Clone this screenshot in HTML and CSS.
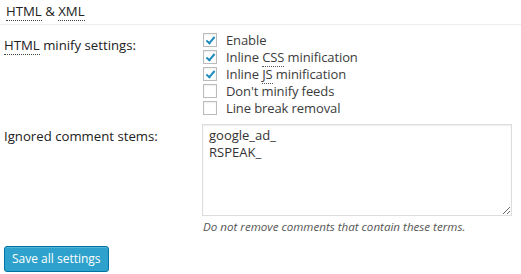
FILE: index.html
```html
<!DOCTYPE html>
<html lang="en">
<head>
    <meta charset="UTF-8">
    <title>HTML &amp; XML</title>
    <link rel="stylesheet" href="styles.css">
</head>
<body>
    <div class="wrap">
        <h3 class="section-title"><abbr>HTML</abbr> &amp; <abbr>XML</abbr></h3>
        <div class="form-table">
            <div class="row">
                <div class="th"><abbr>HTML</abbr> minify settings:</div>
                <div class="td checks">
                    <label><span class="box on"></span><span>Enable</span></label>
                    <label><span class="box on"></span><span>Inline <abbr>CSS</abbr> minification</span></label>
                    <label><span class="box on"></span><span>Inline <abbr>JS</abbr> minification</span></label>
                    <label><span class="box"></span><span>Don't minify feeds</span></label>
                    <label><span class="box"></span><span>Line break removal</span></label>
                </div>
            </div>
            <div class="row">
                <div class="th th-stems">Ignored comment stems:</div>
                <div class="td">
                    <textarea class="stems">google_ad_
RSPEAK_</textarea>
                    <p class="description">Do not remove comments that contain these terms.</p>
                </div>
            </div>
        </div>
        <button class="button-primary">Save all settings</button>
    </div>
</body>
</html>
```
FILE: styles.css
```css
body {
    margin: 0;
    background: #fff;
    color: #3c3c3c;
    font-family: "Open Sans", sans-serif;
    font-size: 13px;
}

abbr {
    text-decoration: none;
    border-bottom: 1px dotted #444;
}

.section-title {
    margin: 0;
    padding: 3px 6px 5px;
    font-size: 13.2px;
    font-weight: 400;
    line-height: 16px;
    color: #222;
    border-bottom: 1px solid #eee;
}

.form-table {
    padding-top: 6px;
}

.row {
    display: flex;
}

.th {
    width: 199px;
    padding-left: 4px;
    font-size: 13.2px;
    font-weight: 400;
    color: #222;
    line-height: 22px;
    padding-top: 3px;
}

.th-stems {
    padding-top: 9px;
}

.td {
    flex: 1;
}

.checks {
    display: flex;
    flex-direction: column;
    letter-spacing: -0.1px;
}

.checks label {
    display: flex;
    align-items: center;
    height: 17px;
    gap: 9px;
}

.box {
    width: 14px;
    height: 14px;
    box-sizing: border-box;
    border: 1px solid #bbb;
    background: #fff;
    box-shadow: inset 0 1px 2px rgba(0, 0, 0, 0.07);
    position: relative;
}

.box.on::after {
    content: "";
    position: absolute;
    left: 4px;
    top: 1px;
    width: 3px;
    height: 7px;
    border: solid #1e8cbe;
    border-width: 0 2px 2px 0;
    transform: rotate(40deg);
}

.checks abbr {
    border-bottom-color: #555;
}

.stems {
    display: block;
    width: 310px;
    height: 92px;
    margin: 8px 0 0 -1px;
    padding: 2px 6px;
    box-sizing: border-box;
    border: 1px solid #ddd;
    box-shadow: inset 0 1px 2px rgba(0, 0, 0, 0.07);
    font-family: "Open Sans", sans-serif;
    font-size: 13px;
    line-height: 17px;
    color: #333;
    resize: vertical;
}

.description {
    margin: 3px 0 0;
    font-style: italic;
    font-size: 11.6px;
    color: #555;
}

.button-primary {
    display: block;
    margin: 12px 0 0 4px;
    height: 26px;
    padding: 0 7px 1px;
    white-space: nowrap;
    background: #2ea2cc;
    border: 1px solid #0074a2;
    border-radius: 3px;
    box-shadow: inset 0 1px 0 rgba(120, 200, 230, 0.5);
    color: #fff;
    font-family: "Open Sans", sans-serif;
    font-size: 12px;
}
```
